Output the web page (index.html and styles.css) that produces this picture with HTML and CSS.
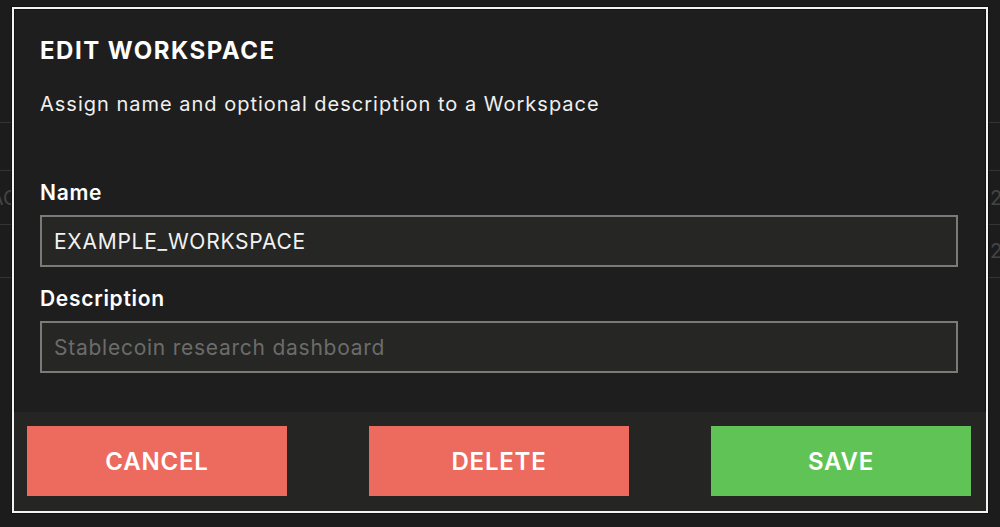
FILE: index.html
```html
<!DOCTYPE html>
<html lang="en">
<head>
    <meta charset="UTF-8">
    <meta name="viewport" content="width=device-width, initial-scale=1.0">
    <title>Edit Workspace</title>
    <link rel="stylesheet" href="styles.css">
</head>
<body>
    <!-- Page behind the dialog -->
    <div class="page">
        <div class="table">
            <div class="row row-head"></div>
            <div class="row"><span class="cell-left">TRAC</span><span class="cell-right">2,</span></div>
            <div class="row"><span class="cell-left"></span><span class="cell-right">2,</span></div>
        </div>
    </div>

    <!-- Edit Workspace dialog -->
    <div class="modal">
        <div class="modal-body">
            <h2 class="modal-title">EDIT WORKSPACE</h2>
            <p class="modal-subtitle">Assign name and optional description to a Workspace</p>

            <form class="modal-form">
                <label for="ws_name">Name</label>
                <input type="text" id="ws_name" name="ws_name" value="EXAMPLE_WORKSPACE">
                <label for="ws_desc">Description</label>
                <input type="text" id="ws_desc" name="ws_desc" placeholder="Stablecoin research dashboard">
            </form>
        </div>

        <div class="modal-footer">
            <button class="btn btn-red">CANCEL</button>
            <button class="btn btn-red">DELETE</button>
            <button class="btn btn-green">SAVE</button>
        </div>
    </div>
</body>
</html>
```

FILE: styles.css
```css
/* General styling */
* {
    box-sizing: border-box;
}
body {
    font-family: Inter, "Noto Sans", sans-serif;
    margin: 0;
    background-color: #1c1c1c;
    color: #fff;
    width: 1000px;
    height: 527px;
    overflow: hidden;
    position: relative;
}

/* Background table (mostly hidden by the dialog) */
.page {
    padding-top: 122px;
}
.row {
    display: flex;
    justify-content: space-between;
    align-items: center;
    border-top: 1px solid #343434;
    height: 54px;
    font-size: 20px;
    color: #444;
}
.row-head {
    height: 48px;
}
.row:last-child {
    border-bottom: 1px solid #343434;
}
.cell-left {
    margin-left: -36px;
}
.cell-right {
    margin-right: -8px;
}

/* Dialog */
.modal {
    position: absolute;
    top: 7px;
    left: 12px;
    width: 976px;
    height: 506px;
    border: 2px solid #f4f4f4;
    background-color: #1e1e1e;
    box-shadow: 0 0 0 1px #121212, inset 0 0 0 1px #121212;
    display: flex;
    flex-direction: column;
}
.modal-body {
    flex: 1;
    padding: 27px 28px 0 26px;
}
.modal-title {
    margin: 0;
    font-size: 24px;
    line-height: 30px;
    font-weight: 700;
    letter-spacing: 1.5px;
}
.modal-subtitle {
    margin: 25px 0 0;
    font-size: 20px;
    line-height: 26px;
    letter-spacing: 1px;
    color: #f0f0f0;
}
.modal-form {
    margin-top: 63px;
}
label {
    display: block;
    font-size: 21px;
    line-height: 26px;
    font-weight: 600;
    letter-spacing: 0.7px;
    margin-bottom: 9px;
}
input[type="text"] {
    display: block;
    width: 100%;
    height: 52px;
    padding: 0 12px;
    border: 2px solid #7a7a77;
    background-color: #262624;
    color: #f2f2f2;
    font-family: inherit;
    font-size: 21px;
    letter-spacing: 0.75px;
    margin-bottom: 19px;
    outline: none;
}
input[type="text"]::placeholder {
    color: #6c6c6a;
}

/* Footer buttons */
.modal-footer {
    display: flex;
    justify-content: space-between;
    background-color: #252523;
    padding: 14px 15px 15px 13px;
}
.btn {
    width: 260px;
    height: 70px;
    border: none;
    color: #fff;
    font-family: inherit;
    font-size: 24px;
    font-weight: 600;
    letter-spacing: 0.8px;
    cursor: pointer;
}
.btn-red {
    background-color: #ec6a5e;
}
.btn-green {
    background-color: #5fc455;
}
```
